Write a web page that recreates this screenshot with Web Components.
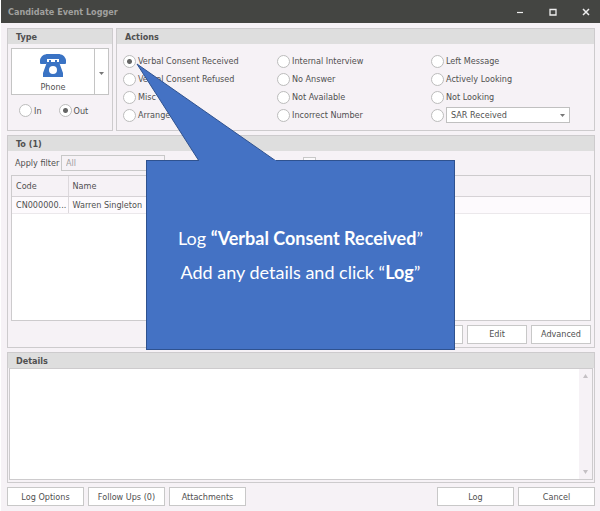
<!DOCTYPE html>
<html lang="en">
<head>
<meta charset="utf-8">
<title>Candidate Event Logger</title>
<style>
html, body { margin: 0; height: 100%; }
body { font: 9px/12px "DejaVu Sans Condensed", "Noto Sans", sans-serif; color: #505050; background: #f6f2f6; }
</style>
</head>
<body>
<event-logger></event-logger>

<template id="t-logger">
<style>
:host { position: relative; display: flex; flex-direction: column; min-height: 100vh; box-sizing: border-box; border-left: 1px solid #fff; background: #f6f2f6; }
main { flex: 1; display: flex; flex-direction: column; gap: 4px; padding: 5px 5px 5px 6px; }
.top { display: grid; grid-template-columns: 106px 1fr; gap: 3px; }
.to { flex: 213 1 0; }
.details { flex: 131 1 0; }
footer { display: flex; gap: 4px; }
footer .gap { flex: 1; }
footer tool-button { width: 77px; }
</style>
<title-bar>Candidate Event Logger</title-bar>
<main>
  <div class="top">
    <group-panel heading="Type"><contact-type></contact-type></group-panel>
    <group-panel heading="Actions"><action-list></action-list></group-panel>
  </div>
  <group-panel class="to" heading="To (1)"><recipient-list></recipient-list></group-panel>
  <group-panel class="details" heading="Details"><details-box></details-box></group-panel>
  <footer>
    <tool-button>Log Options</tool-button>
    <tool-button>Follow Ups (0)</tool-button>
    <tool-button>Attachments</tool-button>
    <span class="gap"></span>
    <tool-button>Log</tool-button>
    <tool-button>Cancel</tool-button>
  </footer>
</main>
<callout-note>
  <p>Log <b>“Verbal Consent Received</b>”</p>
  <p>Add any details and click “<b>Log</b>”</p>
</callout-note>
</template>

<template id="t-title">
<style>
:host { display: flex; align-items: center; height: 23px; padding: 0 2px 0 7px; background: #444542; color: #a0a09e; }
h1 { flex: 1; margin: 0; font: inherit; font-weight: bold; }
nav { display: flex; gap: 9px; }
button { display: grid; place-items: center; width: 24px; height: 20px; padding: 0; border: 0; background: none; color: #eee; }
</style>
<h1><slot></slot></h1>
<nav>
  <button aria-label="Minimize"><svg width="8" height="8"><path d="M1 4.5h6" stroke="currentColor" stroke-width="1.2"/></svg></button>
  <button aria-label="Maximize"><svg width="8" height="8"><path d="M1 1.500h6v5.500H1z" fill="none" stroke="currentColor" stroke-width="1.3"/></svg></button>
  <button aria-label="Close"><svg width="8" height="8"><path d="M1 1l6 6M7 1L1 7" stroke="currentColor" stroke-width="1.5"/></svg></button>
</nav>
</template>

<template id="t-panel">
<style>
:host { display: flex; flex-direction: column; box-sizing: border-box; border: 1px solid #cdcbcd; background: #f6f2f6; }
h2 { margin: 0; padding: 2px 8px 1px; font: inherit; font-weight: bold; background: #dedede; }
.body { flex: 1; display: flex; flex-direction: column; }
</style>
<h2></h2><div class="body"><slot></slot></div>
</template>

<template id="t-radio">
<style>
:host { display: flex; align-items: center; }
label { display: flex; align-items: center; gap: 2px; white-space: nowrap; }
input { appearance: none; flex: none; width: 13px; height: 13px; margin: 0; border: 1px solid #bcbcbc; border-radius: 50%; background: #fff; }
input:checked { background: radial-gradient(circle, #666 0 2px, #fff 3px); }
</style>
<label><input type="radio"><slot></slot></label>
</template>

<template id="t-button">
<style>
:host { display: block; }
button { display: block; width: 100%; height: 19px; padding: 0; border: 1px solid #c8c8c8; background: #fff; font: inherit; color: inherit; }
</style>
<button type="button"><slot></slot></button>
</template>

<template id="t-type">
<style>
:host { display: block; padding: 4px 3px 13px; }
.split { display: flex; border: 1px solid #c4c4c4; background: #fff; }
button { border: 0; padding: 0; background: none; font: inherit; color: inherit; }
.main { flex: 1; display: flex; flex-direction: column; align-items: center; gap: 4px; height: 45px; padding-top: 5px; box-sizing: border-box; }
.more { width: 14px; border-left: 1px solid #c4c4c4; }
.pick { display: flex; gap: 17px; padding: 9px 8px 0; }
</style>
<div class="split">
  <button class="main" type="button">
    <svg width="26" height="23" viewBox="0 0 26 23" fill="#3a73c4"><path d="M0 9V6C1 2 4 0 8 0h10c4 0 7 2 8 6v3q0 1-1 1h-5q-1 0-1-1V5H7v4q0 1-1 1H1Q0 10 0 9z"/><path fill-rule="evenodd" d="M9 6h2v2h4V6h2v2h2l4 11v4H3v-4L7 8h2zM13 12a4 4 0 100 8 4 4 0 000-8z"/></svg>
    <span>Phone</span>
  </button>
  <button class="more" type="button" aria-label="Choose type"><svg width="5" height="3"><path d="M0 0h5L2.500 3z" fill="#777"/></svg></button>
</div>
<div class="pick"><radio-choice>In</radio-choice><radio-choice checked>Out</radio-choice></div>
</template>

<template id="t-actions">
<style>
:host { display: grid; grid-template-columns: 154px 154px 1fr; grid-template-rows: repeat(4, 18px); grid-auto-flow: column; padding: 8px 6px 0; }
.row { display: flex; align-items: center; gap: 2px; }
.sel { position: relative; display: flex; width: 124px; }
select { appearance: none; width: 100%; height: 16px; padding: 0 4px; border: 1px solid #c0c0c0; border-radius: 0; background: #fff; font: inherit; color: inherit; }
.sel svg { position: absolute; right: 5px; top: 7px; pointer-events: none; }
</style>
<radio-choice checked>Verbal Consent Received</radio-choice>
<radio-choice>Verbal Consent Refused</radio-choice>
<radio-choice>Misc</radio-choice>
<radio-choice>Arrange</radio-choice>
<radio-choice>Internal Interview</radio-choice>
<radio-choice>No Answer</radio-choice>
<radio-choice>Not Available</radio-choice>
<radio-choice>Incorrect Number</radio-choice>
<radio-choice>Left Message</radio-choice>
<radio-choice>Actively Looking</radio-choice>
<radio-choice>Not Looking</radio-choice>
<div class="row"><radio-choice label="Other action"></radio-choice><div class="sel"><select aria-label="Other action"><option>SAR Received</option></select><svg width="5" height="3"><path d="M0 0h5L2.500 3z" fill="#777"/></svg></div></div>
</template>

<template id="t-to">
<style>
:host { flex: 1; display: flex; flex-direction: column; gap: 4px; padding: 4px 3px 3px; }
.filter { display: flex; align-items: center; padding-left: 4px; }
.filter label { width: 46px; white-space: nowrap; }
input[type=text] { box-sizing: border-box; width: 104px; height: 16px; padding: 0 4px; border: 1px solid #c8c8c8; background: #f6f2f6; font: inherit; color: #a0a0a0; }
input[type=checkbox] { appearance: none; width: 13px; height: 13px; margin: 0 0 0 138px; border: 1px solid #c8c8c8; background: #fbf9fb; }
.grid { flex: 1; border: 1px solid #cdcbcd; background: #fff; }
table { width: 100%; table-layout: fixed; border-collapse: collapse; }
th, td { box-sizing: border-box; padding: 0 0 0 4px; font-weight: normal; text-align: left; overflow: hidden; text-overflow: ellipsis; white-space: nowrap; }
th { height: 20px; background: #f6f2f6; border-bottom: 1px solid #d6d2d6; }
td { height: 17px; background: #fdfafd; border-bottom: 1px solid #ebe8eb; }
th:first-child, td:first-child { width: 56px; border-right: 1px solid #dcd8dc; }
.tools { display: flex; justify-content: flex-end; gap: 4px; }
tool-button { width: 60px; }
</style>
<div class="filter"><label for="f">Apply filter</label><input id="f" type="text" value="All" disabled><input type="checkbox" aria-label="Include all"></div>
<div class="grid"><table><thead><tr><th>Code</th><th>Name</th></tr></thead><tbody><tr><td>CN000000...</td><td>Warren Singleton</td></tr></tbody></table></div>
<div class="tools"><tool-button label="Add"></tool-button><tool-button>Edit</tool-button><tool-button>Advanced</tool-button></div>
</template>

<template id="t-details">
<style>
:host { flex: 1; display: flex; margin: 0 1px 2px; border: 1px solid #cdcbcd; background: #fff; }
textarea { flex: 1; min-width: 0; border: 0; padding: 2px; resize: none; overflow: hidden; background: #fff; font: inherit; color: inherit; outline: 0; }
.bar { display: flex; flex-direction: column; justify-content: space-between; align-items: center; width: 13px; padding: 5px 0; background: #f6f2f6; }
</style>
<textarea aria-label="Details"></textarea>
<div class="bar"><svg width="5" height="4"><path d="M0 4h5L2.500 0z" fill="#c4c0c4"/></svg><svg width="5" height="4"><path d="M0 0h5L2.500 4z" fill="#c4c0c4"/></svg></div>
</template>

<template id="t-callout">
<style>
:host { position: absolute; left: 145px; top: 160px; width: 309px; height: 190px; box-sizing: border-box; display: flex; flex-direction: column; align-items: center; gap: 10px; padding-top: 65px; background: #4472c4; border: 1px solid #2f528f; color: #fff; font: 18px/24px "Century Gothic", Lato, sans-serif; }
svg { position: absolute; left: -12px; top: -98px; overflow: visible; }
::slotted(p) { margin: 0; }
</style>
<svg width="144" height="99"><path d="M64 98L2 1L141 98" fill="#4472c4" stroke="#2f528f"/><path d="M64 98h77" stroke="#4472c4" stroke-width="2"/></svg>
<slot></slot>
</template>

<script>
const define = (name, id, setup) => customElements.define(name, class extends HTMLElement {
  constructor() {
    super();
    this.attachShadow({ mode: 'open' }).append(document.getElementById(id).content.cloneNode(true));
  }
  connectedCallback() { if (setup) setup(this, this.shadowRoot); }
});
define('title-bar', 't-title');
define('group-panel', 't-panel', (el, root) => { root.querySelector('h2').textContent = el.getAttribute('heading'); });
define('radio-choice', 't-radio', (el, root) => {
  const input = root.querySelector('input');
  input.checked = el.hasAttribute('checked');
  if (el.hasAttribute('label')) input.setAttribute('aria-label', el.getAttribute('label'));
  input.addEventListener('change', () => {
    for (const other of el.getRootNode().querySelectorAll('radio-choice'))
      if (other !== el) other.shadowRoot.querySelector('input').checked = false;
  });
});
define('tool-button', 't-button', (el, root) => {
  if (el.hasAttribute('label')) root.querySelector('button').setAttribute('aria-label', el.getAttribute('label'));
});
define('contact-type', 't-type');
define('action-list', 't-actions');
define('recipient-list', 't-to');
define('details-box', 't-details');
define('callout-note', 't-callout');
define('event-logger', 't-logger');
</script>
</body>
</html>
